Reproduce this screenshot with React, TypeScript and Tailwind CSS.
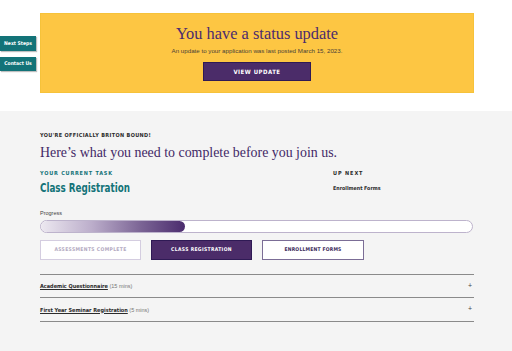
import React from "react";

const serif = "font-['Liberation_Serif','Times_New_Roman',serif]";
const narrow = "font-['DejaVu_Sans_Condensed','DejaVu_Sans',sans-serif]";
const sans = "font-['Liberation_Sans',Arial,sans-serif]";

export default function App() {
  return (
    <div className="w-[512px] h-[351px] flex flex-col bg-white overflow-hidden relative">
      {/* side tabs */}
      <div className="absolute left-0 top-[36px] flex flex-col gap-[6px] z-10">
        <div className={`w-[36px] h-[15px] bg-[#137378] shadow-[1px_1px_1px_rgba(0,0,0,0.25)] flex items-center justify-center text-white text-[5px] font-bold ${narrow}`}>
          Next Steps
        </div>
        <div className={`w-[36px] h-[14px] bg-[#137378] shadow-[1px_1px_1px_rgba(0,0,0,0.25)] flex items-center justify-center text-white text-[5px] font-bold ${narrow}`}>
          Contact Us
        </div>
      </div>

      {/* top white section */}
      <div className="h-[111px] shrink-0 pt-[13px] pl-[40px]">
        <div className="w-[434px] h-[80px] bg-[#fdc643] border border-[#f6c23a] flex flex-col items-center">
          <div className={`mt-[10px] text-[16.4px] leading-[20px] text-[#4b2c6e] ${serif}`}>
            You have a status update
          </div>
          <div className={`mt-[2px] text-[6.2px] leading-[10px] text-[#4a4238] ${sans}`}>
            An update to your application was last posted March 15, 2023.
          </div>
          <div className={`mt-[6px] w-[108px] h-[19px] bg-[#4b2c69] border border-[#2f1a55] flex items-center justify-center text-white text-[6px] font-bold tracking-[0.5px] ${narrow}`}>
            VIEW UPDATE
          </div>
        </div>
      </div>

      {/* gray section */}
      <div className="flex-1 bg-[#f4f4f4] pl-[40px] pt-[20px]">
        <div className="w-[434px] flex flex-col">
          <div className={`text-[5.5px] leading-[8px] font-bold tracking-[0.35px] text-[#2b2b2b] ${narrow}`}>
            YOU'RE OFFICIALLY BRITON BOUND!
          </div>
          <div className={`mt-[5px] text-[13.9px] leading-[18px] text-[#422866] ${serif}`}>
            Here’s what you need to complete before you join us.
          </div>
          <div className="flex">
            <div className="w-[293px] flex flex-col">
              <div className={`mt-[7px] text-[5.5px] leading-[8px] font-bold tracking-[0.8px] text-[#137378] ${narrow}`}>
                YOUR CURRENT TASK
              </div>
              <div className={`mt-[4px] text-[12.5px] leading-[14px] font-bold text-[#137378] ${narrow}`}>
                <span className="inline-block origin-left scale-x-[0.78] whitespace-nowrap">Class Registration</span>
              </div>
            </div>
            <div className="flex flex-col">
              <div className={`mt-[7px] text-[5.5px] leading-[8px] font-bold tracking-[0.9px] text-[#2b2b2b] ${narrow}`}>
                UP NEXT
              </div>
              <div className={`mt-[4px] text-[5.3px] leading-[14px] font-bold text-[#2b2b2b] ${narrow}`}>
                Enrollment Forms
              </div>
            </div>
          </div>
          <div className={`mt-[14px] text-[5.5px] leading-[8px] text-[#444] ${sans}`}>Progress</div>
          <div className="mt-[3px] h-[13px] w-[433px] rounded-full border border-[#bdb3cc] bg-white overflow-hidden">
            <div className="h-full w-[144px] rounded-full bg-[linear-gradient(to_right,#ece8f0,#bcaecb_35%,#7a6394_70%,#4b2c6e)]" />
          </div>
          <div className="mt-[7px] flex gap-[10px]">
            <div className={`w-[101px] h-[20px] bg-white border border-[#d4cde0] flex items-center justify-center text-[5px] font-bold tracking-[0.35px] text-[#b3aac1] ${narrow}`}>
              ASSESSMENTS COMPLETE
            </div>
            <div className={`w-[101px] h-[20px] bg-[#4b2c69] border border-[#2f1a55] flex items-center justify-center text-[5px] font-bold tracking-[0.35px] text-white ${narrow}`}>
              CLASS REGISTRATION
            </div>
            <div className={`w-[102px] h-[20px] bg-white border border-[#7b6d96] flex items-center justify-center text-[5px] font-bold tracking-[0.2px] text-[#3b2a5a] ${narrow}`}>
              ENROLLMENT FORMS
            </div>
          </div>
          <div className="mt-[14px] border-t border-[#8a8a8a]">
            <div className="h-[23px] flex items-center justify-between border-b border-[#8a8a8a] pr-[2px]">
              <div className="text-[5.5px] leading-[8px]">
                <span className={`font-bold underline text-[#2b2b2b] ${narrow}`}>Academic Questionnaire</span>
                <span className={`text-[#777] ${sans}`}> (15 mins)</span>
              </div>
              <span className={`text-[7px] text-[#444] ${sans}`}>+</span>
            </div>
            <div className="h-[24px] flex items-center justify-between border-b border-[#8a8a8a] pr-[2px]">
              <div className="text-[5.5px] leading-[8px]">
                <span className={`font-bold underline text-[#2b2b2b] ${narrow}`}>First Year Seminar Registration</span>
                <span className={`text-[#777] ${sans}`}> (5 mins)</span>
              </div>
              <span className={`text-[7px] text-[#444] ${sans}`}>+</span>
            </div>
          </div>
        </div>
      </div>
    </div>
  );
}
